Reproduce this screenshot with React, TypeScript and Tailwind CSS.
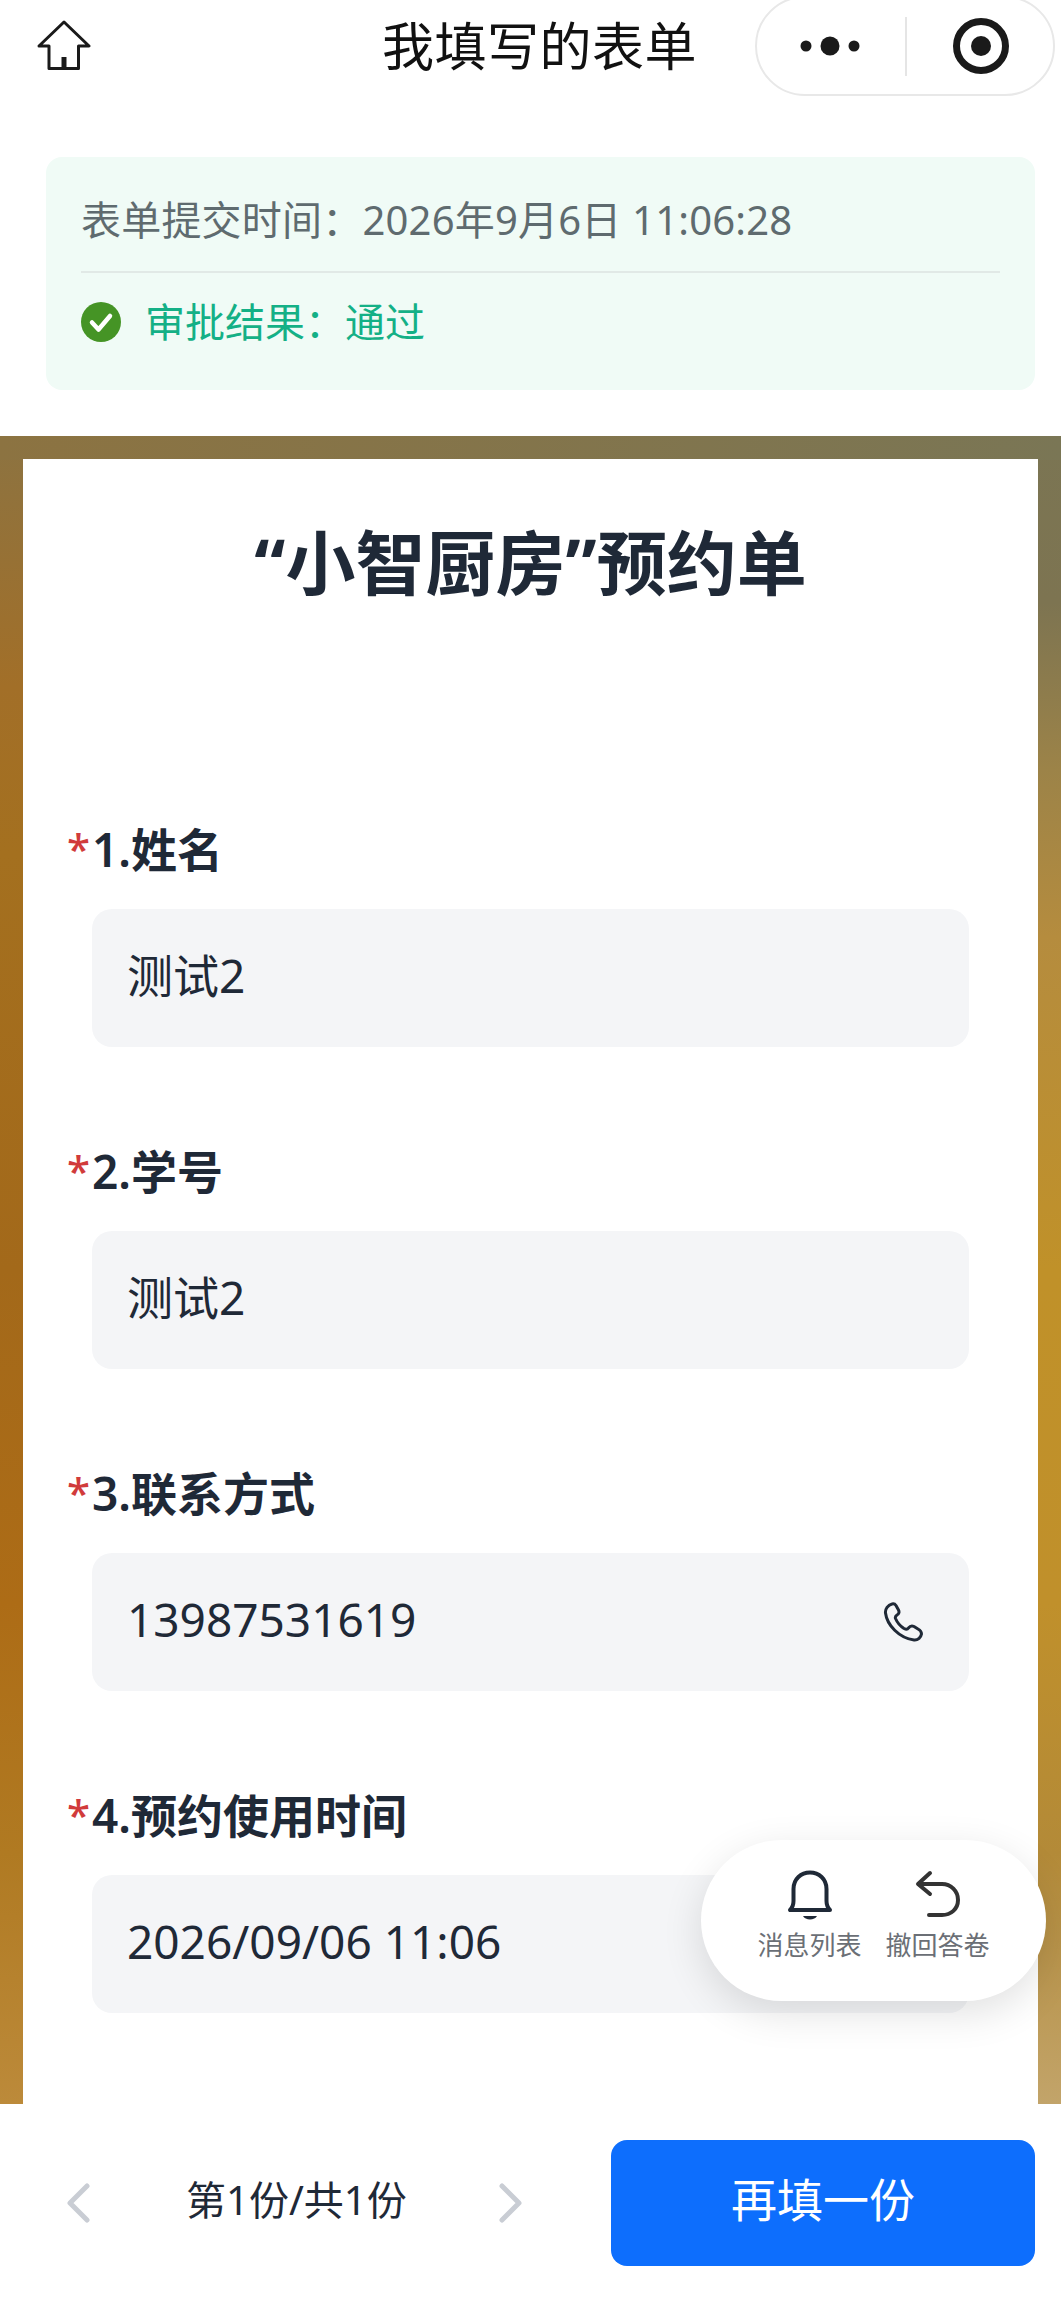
import React from 'react';

const fieldFont = '[font-family:"Noto_Sans","Noto_Sans_CJK_SC",sans-serif]';

const fields = [
  { label: '1.姓名', value: '测试2' },
  { label: '2.学号', value: '测试2' },
  { label: '3.联系方式', value: '13987531619', phone: true },
  { label: '4.预约使用时间', value: '2026/09/06 11:06' },
];

const HomeIcon = () => (
  <svg width="54" height="52" viewBox="0 0 54 52" fill="none" stroke="#1a1a1a" strokeWidth="3" strokeLinejoin="round">
    <path d="M27 2 L52 26 H41.5 V48.5 H12 V26 H2 Z" />
    <path d="M27 37 V48" strokeWidth="5" />
  </svg>
);

const MenuCapsule = () => (
  <div className="flex items-center w-[300px] h-[100px] shrink-0 rounded-full border-2 border-[#e8e8e8] bg-white">
    <svg width="148" height="20" viewBox="0 0 148 20" fill="#1a1a1a" className="shrink-0">
      <circle cx="49" cy="10" r="5.5" />
      <circle cx="73" cy="10" r="9.5" />
      <circle cx="97" cy="10" r="5.5" />
    </svg>
    <div className="w-[2px] h-[59px] bg-[#e5e5e5]" />
    <svg width="60" height="60" viewBox="0 0 60 60" className="ml-[44px] shrink-0">
      <circle cx="30" cy="30" r="24.5" fill="none" stroke="#1a1a1a" strokeWidth="7" />
      <circle cx="30" cy="30" r="10" fill="#1a1a1a" />
    </svg>
  </div>
);

const PhoneIcon = () => (
  <svg width="40" height="40" viewBox="0 0 40 40" fill="none" stroke="#1f2937" strokeWidth="3" strokeLinejoin="round" strokeLinecap="round">
    <path d="M9 2 C5 3 2 7 2.5 11 C4 23 16 36 31 38 C35 38.5 38 35 38.5 32 C38.5 30 37 28 35 27 L31 24.5 C29 23.5 27 24 25.5 26 C24.5 27.5 23 27.5 21 26.5 C17 24 14 20 12.5 16.5 C12 15 12.5 14 14 13 C16 12 16.5 10 15.5 8 L13 3.5 C12 2 10.5 1.5 9 2 Z" />
  </svg>
);

const BellIcon = () => (
  <svg width="46" height="52" viewBox="0 0 46 52" fill="none" stroke="#1f2937" strokeWidth="4" strokeLinecap="round" strokeLinejoin="round">
    <path d="M3 40 H43 C40 37 39.5 35 39.5 31 V19 C39.5 9 32 2.5 23 2.5 C14 2.5 6.5 9 6.5 19 V31 C6.5 35 6 37 3 40 Z" />
    <path d="M16 46 H30 C28 50.5 18 50.5 16 46 Z" fill="#1f2937" stroke="none" />
  </svg>
);

const UndoIcon = () => (
  <svg width="46" height="48" viewBox="0 0 46 48" fill="none" stroke="#333333" strokeWidth="4" strokeLinecap="round" strokeLinejoin="round">
    <path d="M15 3 L3 14 L15 24" />
    <path d="M4 14 H27 C36 14 43 21 43 30 C43 39 36 45 27 45 H14" />
  </svg>
);

const Chevron = ({ flip }: { flip?: boolean }) => (
  <svg width="24" height="40" viewBox="0 0 24 40" fill="none" stroke="#c9cdd4" strokeWidth="5" strokeLinecap="round" strokeLinejoin="round" className={flip ? 'rotate-180' : ''}>
    <path d="M21 3 L4 20 L21 37" />
  </svg>
);

export default function App() {
  return (
    <div className={`relative flex flex-col w-[1061px] h-[2301px] overflow-hidden bg-white ${fieldFont}`}>
      {/* top bar */}
      <div className="flex items-center h-[92px] pl-[37px] shrink-0">
        <HomeIcon />
        <h1 className="ml-[291px] w-[322px] text-[52px] tracking-[0.5px] leading-[60px] text-[#111111] whitespace-nowrap">我填写的表单</h1>
        <div className="ml-[51px]">
          <MenuCapsule />
        </div>
      </div>

      {/* result card */}
      <div className="ml-[46px] mr-[26px] mt-[65px] h-[233px] shrink-0 rounded-[16px] bg-[#f0fbf6] pl-[35px] pr-[35px]">
        <div className="h-[116px] pt-[12px] flex items-center border-b-2 border-[#e1e9e6] text-[40px] tracking-[0.2px] text-[#5f6b6f] whitespace-nowrap">
          表单提交时间：2026年9月6日 11:06:28
        </div>
        <div className="flex items-center h-[98px] gap-[24px] text-[40px] text-[#14b086]">
          <svg width="40" height="40" viewBox="0 0 40 40">
            <circle cx="20" cy="20" r="20" fill="#459425" />
            <path d="M11 20.5 L17.5 27.5 L29 14" fill="none" stroke="#ffffff" strokeWidth="4.5" strokeLinecap="round" strokeLinejoin="round" />
          </svg>
          审批结果：通过
        </div>
      </div>

      {/* form on the gradient backdrop */}
      <div className="mt-[46px] flex-1 min-h-0 px-[23px] pt-[23px] [background:linear-gradient(to_right,#8c7341,#7a7655)_top/100%_24px_no-repeat,linear-gradient(#8c7341_0%,#a26f28_15%,#a4701f_25%,#a3691a_50%,#ad6c16_70%,#b07a22_85%,#bc8a3a_100%)_left/50%_100%_no-repeat,linear-gradient(#7b7553_0%,#7d7451_10%,#9c8348_20%,#b58c3e_30%,#c09129_50%,#c0902b_70%,#b38a38_85%,#c2a46a_100%)_right/50%_100%_no-repeat]">
        <div className="h-full bg-white px-[69px]">
          <h2 className="pt-[62px] text-center text-[70px] leading-[84px] font-bold text-[#1f2937] whitespace-nowrap">“小智厨房”预约单</h2>
          <div className="mt-[213px] flex flex-col gap-[93px]">
            {fields.map((field) => (
              <div key={field.label}>
                <div className="relative h-[62px] flex items-center text-[46px] font-semibold text-[#1f2937] whitespace-nowrap">
                  <span className="absolute -left-[25px] top-[6px] text-[42px] leading-[50px] font-medium text-[#d13b3b]">*</span>
                  {field.label}
                </div>
                <div className="mt-[29px] flex items-center justify-between h-[138px] rounded-[20px] bg-[#f4f5f7] pl-[35px] pr-[46px] text-[46px] text-[#1f2937]">
                  <span className="pb-[6px]">{field.value}</span>
                  {field.phone && <PhoneIcon />}
                </div>
              </div>
            ))}
          </div>
        </div>
      </div>

      {/* bottom bar */}
      <div className="flex items-center h-[197px] shrink-0 bg-white pl-[66px] pr-[26px]">
        <Chevron />
        <div className="ml-[96px] w-[220px] pb-[5px] text-[40px] text-[#1f2937] whitespace-nowrap">第1份/共1份</div>
        <div className="ml-[93px]">
          <Chevron flip />
        </div>
        <button className="ml-auto w-[424px] h-[126px] pb-[6px] rounded-[16px] bg-[#0d6efd] text-[46px] text-white">再填一份</button>
      </div>

      {/* floating actions */}
      <div className="absolute left-[701px] top-[1840px] flex justify-center gap-[24px] w-[345px] h-[161px] pt-[30px] rounded-full bg-white shadow-[0_12px_40px_rgba(0,0,0,0.12)]">
        <div className="flex flex-col items-center w-[104px]">
          <BellIcon />
          <span className="mt-[4px] text-[26px] text-[#6b6f76] whitespace-nowrap">消息列表</span>
        </div>
        <div className="flex flex-col items-center w-[104px]">
          <UndoIcon />
          <span className="mt-[8px] text-[26px] text-[#6b6f76] whitespace-nowrap">撤回答卷</span>
        </div>
      </div>
    </div>
  );
}
